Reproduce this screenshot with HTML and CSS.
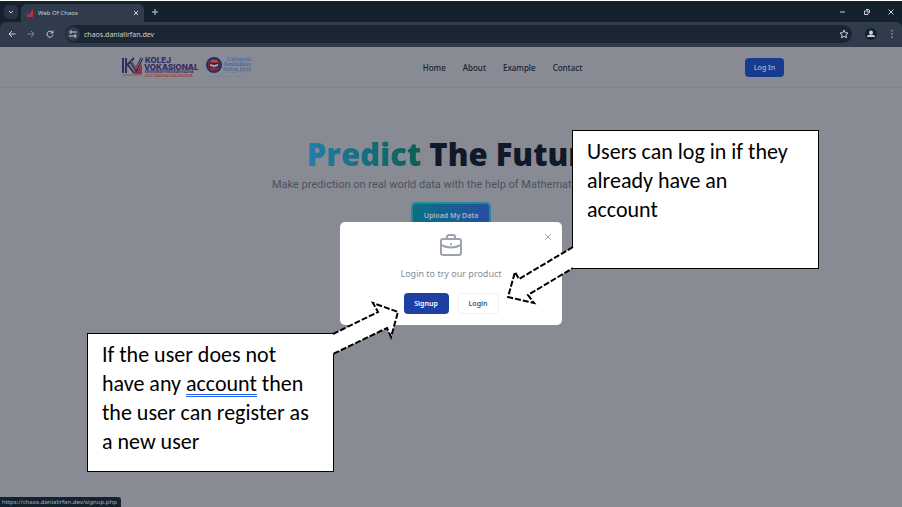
FILE: index.html
```html
<!DOCTYPE html>
<html lang="en">
<head>
<meta charset="utf-8">
<title>Web Of Chaos</title>
<link rel="stylesheet" href="styles.css">
</head>
<body>
<div class="browser">
  <div class="tabs">
    <button class="tab-search" aria-label="Search tabs"><svg width="8" height="8" viewBox="0 0 8 8"><path d="M2 3l2 2 2-2"/></svg></button>
    <div class="tab">
      <svg class="favicon" width="9" height="8" viewBox="0 0 9 8"><path d="M0 1h2v6H0z" fill="#39375f"/><path d="M2 4l2 2 4-6v8H2z" fill="#b8343c"/></svg>
      <span class="tab-title">Web Of Chaos</span>
      <button aria-label="Close tab"><svg width="8" height="8" viewBox="0 0 8 8"><path d="M2 2l4 4M6 2L2 6"/></svg></button>
    </div>
    <button class="new-tab" aria-label="New tab"><svg width="8" height="8" viewBox="0 0 8 8"><path d="M4 1v6M1 4h6"/></svg></button>
    <div class="window-controls">
      <button aria-label="Minimize"><svg width="8" height="8" viewBox="0 0 8 8"><path d="M1 4h5"/></svg></button>
      <button aria-label="Restore"><svg width="8" height="8" viewBox="0 0 8 8"><path d="M1.500 3h3.500v3.500H1.500zM3 1.500h2q1.500 0 1.500 1.500v2"/></svg></button>
      <button aria-label="Close"><svg width="8" height="8" viewBox="0 0 8 8"><path d="M1.500 1.500l5 5M6.500 1.500l-5 5"/></svg></button>
    </div>
  </div>
  <div class="toolbar">
    <button aria-label="Back"><svg width="8" height="8" viewBox="0 0 8 8"><path d="M7.500 4H1M4 1L1 4l3 3"/></svg></button>
    <button class="dim" aria-label="Forward"><svg width="8" height="8" viewBox="0 0 8 8"><path d="M.5 4H7M4 1l3 3-3 3"/></svg></button>
    <button aria-label="Reload"><svg width="8" height="8" viewBox="0 0 8 8"><path d="M6.500 2.500A3 3 0 1 0 7 4.500M7 .5v2.500H4.500"/></svg></button>
    <div class="address">
      <button class="site-info" aria-label="Site information"><svg width="8" height="8" viewBox="0 0 8 8"><path d="M4 2h4M0 6h4"/><circle cx="2" cy="2" r="1.200"/><circle cx="6" cy="6" r="1.200"/></svg></button>
      <input type="text" aria-label="Address" value="chaos.danialirfan.dev">
      <button class="bookmark" aria-label="Bookmark"><svg width="10" height="10" viewBox="0 0 10 10"><path d="M5 1l1.200 2.700 2.800.3-2.100 1.900.6 2.900L5 7.300 2.500 8.800l.6-2.900L1 4l2.800-.3z"/></svg></button>
    </div>
    <button class="profile" aria-label="Profile"><svg width="8" height="8" viewBox="0 0 8 8"><path class="solid" d="M0 7V6q1-1.500 4-1.500T8 6v1z"/><circle class="solid" cx="4" cy="2.500" r="2"/></svg></button>
    <button aria-label="Menu"><svg width="8" height="10" viewBox="0 0 8 10"><path d="M4 1v1.400M4 4.300v1.400M4 7.600V9"/></svg></button>
  </div>
</div>

<div class="page">
  <header class="site-header">
    <div class="logos">
      <svg width="76" height="24" viewBox="0 0 76 24" role="img" aria-label="Kolej Vokasional">
        <path d="M1 3v15M4 3v15M4 11l8-8M6 10l6 8" fill="none" stroke="#302e60" stroke-width="2"/>
        <path d="M20 9v10h-9z" fill="#a02c40"/>
        <path d="M9 7l5 8L20 3" fill="none" stroke="#302e60" stroke-width="3"/>
        <path d="M9 6l5 8 6-11" fill="none" stroke="#a56755"/>
        <path d="M1 20h19" stroke="#a5464b" stroke-width="1"/>
        <g font-family="Inter, sans-serif" font-weight="800" fill="#302e60">
          <text x="23" y="8" font-size="8">KOLEJ</text><text x="22" y="15" font-size="8">VOKASIONAL</text>
        </g>
        <g font-family="Carlito, sans-serif" font-weight="700" font-size="3">
          <text x="23" y="18" fill="#302e60">KEMENTERIAN PENDIDIKAN MALAYSIA</text>
          <text x="23" y="22" fill="#a53a3a">KOLEJ VOKASIONAL KUALA SELANGOR</text>
        </g>
      </svg>
      <svg width="46" height="24" viewBox="0 0 46 24" role="img" aria-label="Universiti Pendidikan Sultan Idris">
        <circle cx="8" cy="10" r="7" fill="#8e2b35" stroke="#262f63" stroke-width="2"/>
        <path d="M3 8h10v5l-5-1-5 1z" fill="#34264c"/><path d="M4 9l4 1 4-1v2l-4 1-4-1z" fill="#b5a69c"/><path d="M5 6h6" stroke="#a78b67"/>
        <g font-family="Liberation Serif, serif" font-size="6" fill="#2f5fa5">
          <text x="21" y="6">Universiti</text><text x="18" y="11">Pendidikan</text><text x="17" y="16">Sultan Idris</text>
        </g>
        <path d="M24 18c3-2 3 1 6-1s4 1 7-1 3 1 6 0" fill="none" stroke="#a86b79"/>
        <text x="2" y="22" font-size="2" font-family="Liberation Serif, serif" fill="#4777a2">SULTAN IDRIS EDUCATION UNIVERSITY</text>
      </svg>
    </div>
    <nav><a href="#">Home</a><a href="#">About</a><a href="#">Example</a><a href="#">Contact</a></nav>
    <button class="log-in">Log In</button>
  </header>

  <main class="hero">
    <h1><span>Predict</span> The Future</h1>
    <p>Make prediction on real world data with the help of Mathematics</p>
    <button class="upload">Upload My Data</button>
  </main>

  <section class="modal" role="dialog" aria-label="Login">
    <button class="close" aria-label="Close"><svg width="8" height="8" viewBox="0 0 8 8"><path d="M1 1l6 6M7 1L1 7"/></svg></button>
    <svg class="briefcase" width="22" height="22" viewBox="0 0 22 22"><rect x="1" y="5" width="20" height="16" rx="2"/><path d="M7 5V3q0-2 2-2h4q2 0 2 2v2M1 11q10 5 20 0M11 10v.5"/></svg>
    <p>Login to try our product</p>
    <div class="actions"><button class="signup">Signup</button><button class="login">Login</button></div>
  </section>

  <aside class="callout callout-login">
    <svg class="arrow" width="66" height="60" viewBox="0 0 66 60"><path class="fill" d="M66 6L12 38 8 31 1 56l26 6-6-8 45-27z"/><path d="M66 6L12 38 8 31 1 56l26 6-6-8 45-27"/></svg>
    Users can log in if they already have an account
  </aside>
  <aside class="callout callout-signup">
    <svg class="arrow" width="66" height="56" viewBox="0 0 66 56"><path class="fill" d="M0 32l45-22-5-9 25 9-7 25-4-9L0 52z"/><path d="M0 32l45-22-5-9 25 9-7 25-4-9L0 52"/></svg>
    If the user does not have any <span class="flagged">account</span> then the user can register as a new user
  </aside>
  <div class="status">https://chaos.danialirfan.dev/signup.php</div>
</div>
</body>
</html>
```
FILE: styles.css
```css
* { box-sizing: border-box; }
body {
  margin: 0;
  min-height: 100vh;
  display: flex;
  flex-direction: column;
  font-family: "Noto Sans", "Open Sans", sans-serif;
  background: #888b94;
}
button, input { font: inherit; border: 0; padding: 0; margin: 0; background: none; color: inherit; }
button { display: flex; align-items: center; justify-content: center; }
svg { display: block; flex: none; overflow: visible; }

.browser { border-top: 1px solid #fff; background: #14222e; color: #cbd0d8; font-size: 7px; }
.browser svg, .close svg { fill: none; stroke: currentColor; }
.browser .favicon { stroke: none; }
.solid { fill: #cbd0d8; stroke: none; }
.tabs { display: flex; align-items: center; height: 21px; padding: 0 7px 0 4px; }
.tab-search { width: 14px; height: 14px; border-radius: 5px; background: #283443; }
.tab {
  display: flex;
  align-items: center;
  align-self: flex-end;
  gap: 4px;
  width: 123px;
  height: 18px;
  margin-left: 3px;
  padding: 0 4px;
  border-radius: 6px 6px 0 0;
  background: #303b4b;
}
.tab-title { flex: 1; font-size: 6px; }
.new-tab { margin-left: 7px; }
.window-controls { display: flex; gap: 16px; margin-left: auto; }
.toolbar { display: flex; align-items: center; gap: 11px; height: 25px; padding: 0 6px 1px 8px; background: #303b4b; border-radius: 6px 6px 0 0; }
.dim { color: #7c8695; }
.address { flex: 1; display: flex; align-items: center; gap: 4px; height: 18px; margin-right: 2px; padding: 0 3px 0 1px; border-radius: 9px; background: #1a2733; }
.address input { flex: 1; min-width: 0; }
.bookmark { width: 10px; }
.site-info { width: 14px; height: 14px; border-radius: 50%; background: #303b4b; }
.profile { width: 12px; height: 12px; border-radius: 50%; background: #14222e; }

.page { position: relative; flex: 1; }
.site-header {
  display: flex;
  align-items: center;
  justify-content: space-between;
  height: 41px;
  padding: 0 118px 0 122px;
  border-bottom: 1px solid #80848e;
}
.logos { display: flex; gap: 8px; padding-right: 8px; }
nav { display: flex; gap: 17px; font-size: 8px; font-weight: 500; color: #182232; }
nav a { color: inherit; text-decoration: none; }
.log-in { width: 39px; height: 19px; border-radius: 4px; background: #163b91; color: #a3adc7; font-size: 7px; font-weight: 600; }

.hero { display: flex; flex-direction: column; align-items: center; padding-top: 46px; }
h1 { width: 288px; margin: 0; font-family: "Open Sans", sans-serif; font-size: 31px; line-height: 40px; font-weight: 800; color: #111827; white-space: nowrap; }
h1 span { color: transparent; background: linear-gradient(90deg, #257daa, #096052); background-clip: text; -webkit-background-clip: text; }
.hero p { width: 358px; margin: 2px 0 8px; font-family: Roboto, sans-serif; font-size: 11px; line-height: 18px; color: #4b5260; white-space: nowrap; }
.upload { width: 80px; height: 26px; border: 2px solid #238b98; border-radius: 5px; background: linear-gradient(90deg, #087184, #284e9f); color: #a6b4c8; font-size: 7px; font-weight: 600; }

.modal {
  position: absolute;
  top: 175px;
  left: 50%;
  transform: translateX(-50%);
  display: flex;
  flex-direction: column;
  align-items: center;
  width: 222px;
  padding: 12px 0 11px;
  border-radius: 5px;
  background: #fff;
}
.briefcase { fill: none; stroke: #9ca3af; stroke-width: 2; stroke-linecap: round; }
.modal p { margin: 9px 0 10px; font-size: 9px; line-height: 18px; color: #858c99; }
.close { position: absolute; top: 11px; right: 10px; color: #9ca3af; }
.actions { display: flex; gap: 9px; font-size: 7px; font-weight: 600; }
.signup { width: 45px; height: 21px; border-radius: 4px; background: #1e40a0; color: #fff; }
.login { width: 41px; height: 21px; border: 1px solid #eef0f3; border-radius: 4px; color: #4b5260; }

.callout {
  position: absolute;
  width: 247px;
  height: 139px;
  padding: 6px 16px 0 14px;
  border: 1px solid #000;
  background: #fff;
  color: #000;
  font-family: Carlito, Lato, sans-serif;
  font-size: 22px;
  line-height: 29px;
}
.callout-login { top: 83px; left: calc(50% + 121px); padding-right: 30px; }
.callout-signup { top: 286px; left: calc(50% - 364px); }
.flagged { text-decoration: underline double #2563eb 1px; text-underline-offset: 3px; }
.arrow { position: absolute; fill: none; stroke: #000; stroke-width: 2; stroke-dasharray: 6 2; }
.arrow .fill { fill: #fff; stroke: none; }
.callout-login .arrow { top: 110px; right: 100%; }
.callout-signup .arrow { top: -32px; left: 100%; }

.status { position: absolute; left: 0; bottom: 0; padding: 0 4px 0 2px; border-radius: 0 3px 0 0; background: #14222e; color: #a6b0bd; font-size: 6px; line-height: 10px; }
```
